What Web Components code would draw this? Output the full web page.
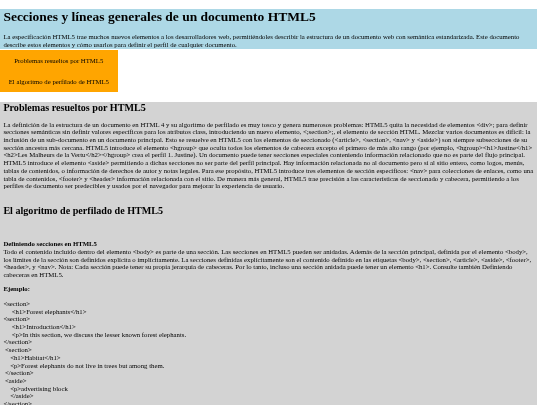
<!DOCTYPE html>
<html lang="es">
<head>
<meta charset="utf-8">
<title>Secciones y líneas generales de un documento HTML5</title>
<style>
  html, body { margin: 0; height: 100%; overflow: hidden; background: #fff; }
  body { font-family: "Liberation Serif", "Times New Roman", serif; color: #000; }
  doc-page { zoom: 0.421875; filter: blur(0.3px); }
</style>
</head>
<body>
<doc-page>
  <doc-header slot="header" heading="Secciones y líneas generales de un documento HTML5">
    La especificación HTML5 trae muchos nuevos elementos a los desarrolladores web, permitiéndoles describir la estructura de un documento web con semántica estandarizada. Este documento describe estos elementos y cómo usarlos para definir el perfil de cualquier documento.
  </doc-header>
  <doc-nav slot="nav">
    <span>Problemas resueltos por HTML5</span>
    <span>El algoritmo de perfilado de HTML5</span>
  </doc-nav>
  <doc-section heading="Problemas resueltos por HTML5">
    <p>La definición de la estructura de un documento en HTML 4 y su algoritmo de perfilado es muy tosco y genera numerosos problemas: HTML5 quita la necesidad de elementos &lt;div&gt;; para definir secciones semánticas sin definir valores específicos para los atributos class, introduciendo un nuevo elemento, &lt;;section&gt;;, el elemento de sección HTML. Mezclar varios documentos es difícil: la inclusión de un sub-documento en un documento principal. Esto se resuelve en HTML5 con los elementos de seccionado (&lt;article&gt;, &lt;section&gt;, &lt;nav&gt; y &lt;aside&gt;) son siempre subsecciones de su sección ancestra más cercana. HTML5 introduce el elemento &lt;hgroup&gt; que oculta todos los elementos de cabecera excepto el primero de más alto rango (por ejemplo, &lt;hgroup&gt;&lt;h1&gt;Justine&lt;/h1&gt; &lt;h2&gt;Les Malheurs de la Vertu&lt;/h2&gt;&lt;/hgroup&gt; crea el perfil 1. Justine). Un documento puede tener secciones especiales conteniendo información relacionado que no es parte del flujo principal. HTML5 introduce el elemento &lt;aside&gt; permitiendo a dichas secciones no ser parte del perfil principal. Hay información relacionada no al documento pero sí al sitio entero, como logos, menús, tablas de contenidos, o información de derechos de autor y notas legales. Para ese propósito, HTML5 introduce tres elementos de sección específicos: &lt;nav&gt; para colecciones de enlaces, como una tabla de contenidos, &lt;footer&gt; y &lt;header&gt; información relacionada con el sitio. De manera más general, HTML5 trae precisión a las características de seccionado y cabecera, permitiendo a los perfiles de documento ser predecibles y usados por el navegador para mejorar la experiencia de usuario.</p>
  </doc-section>
  <doc-section heading="El algoritmo de perfilado de HTML5">
    <h4>Definiendo secciones en HTML5</h4>
    <p>Todo el contenido incluido dentro del elemento &lt;body&gt; es parte de una sección. Las secciones en HTML5 pueden ser anidadas. Además de la sección principal, definida por el elemento &lt;body&gt;, los límites de la sección son definidos explícita o implícitamente. La secciones definidas explícitamente son el contenido definido en las etiquetas &lt;body&gt;, &lt;section&gt;, &lt;article&gt;, &lt;aside&gt;, &lt;footer&gt;, &lt;header&gt;, y &lt;nav&gt;. Nota: Cada sección puede tener su propia jerarquía de cabeceras. Por lo tanto, incluso una sección anidada puede tener un elemento &lt;h1&gt;. Consulte también Definiendo cabeceras en HTML5.</p>
    <p><b>Ejemplo:</b></p>
    <p>&lt;section&gt;<br>
    &nbsp;&nbsp;&nbsp;&nbsp;&nbsp;&lt;h1&gt;Forest elephants&lt;/h1&gt;<br>
    &lt;section&gt;<br>
    &nbsp;&nbsp;&nbsp;&nbsp;&nbsp;&lt;h1&gt;Introduction&lt;/h1&gt;<br>
    &nbsp;&nbsp;&nbsp;&nbsp;&nbsp;&lt;p&gt;In this section, we discuss the lesser known forest elephants.<br>
    &lt;/section&gt;<br>
    &nbsp;&lt;section&gt;<br>
    &nbsp;&nbsp;&nbsp;&nbsp;&lt;h1&gt;Habitat&lt;/h1&gt;<br>
    &nbsp;&nbsp;&nbsp;&nbsp;&lt;p&gt;Forest elephants do not live in trees but among them.<br>
    &nbsp;&lt;/section&gt;<br>
    &nbsp;&lt;aside&gt;<br>
    &nbsp;&nbsp;&nbsp;&nbsp;&lt;p&gt;advertising block<br>
    &nbsp;&nbsp;&nbsp;&nbsp;&lt;/aside&gt;<br>
    &lt;/section&gt;</p>
  </doc-section>
</doc-page>

<script>
class DocPage extends HTMLElement {
  constructor() {
    super();
    this.attachShadow({ mode: "open" });
    this.shadowRoot.innerHTML = `
      <style>
        :host { display: block; width: 1272px; line-height: 18.25px; font-size: 16px; }
        #top { display: flex; flex-direction: column; align-items: flex-start; margin-bottom: 23px; }
        ::slotted([slot="header"]) { align-self: stretch; }
      </style>
      <div id="top">
        <slot name="header"></slot>
        <slot name="nav"></slot>
      </div>
      <slot></slot>`;
  }
}

class DocHeader extends HTMLElement {
  constructor() {
    super();
    this.attachShadow({ mode: "open" });
    this.shadowRoot.innerHTML = `
      <style>
        :host { display: block; margin-top: 21px; padding: 0 8px; background: lightblue; }
        h1 { margin: 0 0 21px; font-size: 32px; line-height: 37px; }
        p { margin: 0; }
      </style>
      <h1></h1>
      <p><slot></slot></p>`;
  }

  connectedCallback() {
    this.shadowRoot.querySelector("h1").textContent = this.getAttribute("heading");
  }
}

class DocNav extends HTMLElement {
  constructor() {
    super();
    this.attachShadow({ mode: "open" });
    this.shadowRoot.innerHTML = `
      <style>
        :host { display: flex; flex-direction: column; gap: 32px; box-sizing: border-box; width: 279px;
          margin-top: 2px; padding: 17px 0 15px; background: orange; text-align: center; }
      </style>
      <slot></slot>`;
  }
}

class DocSection extends HTMLElement {
  constructor() {
    super();
    this.attachShadow({ mode: "open" });
    this.shadowRoot.innerHTML = `
      <style>
        :host { display: block; padding: 0 8px 20px; background: lightgray; }
        h2 { margin: 0 0 17px; font-size: 24px; line-height: 28px; }
        ::slotted(h4) { margin: 55px 0 0; font-size: 16px; }
        ::slotted(p) { margin: 0 0 16px; }
      </style>
      <h2></h2>
      <slot></slot>`;
  }

  connectedCallback() {
    this.shadowRoot.querySelector("h2").textContent = this.getAttribute("heading");
  }
}

customElements.define("doc-page", DocPage);
customElements.define("doc-header", DocHeader);
customElements.define("doc-nav", DocNav);
customElements.define("doc-section", DocSection);
</script>
</body>
</html>
